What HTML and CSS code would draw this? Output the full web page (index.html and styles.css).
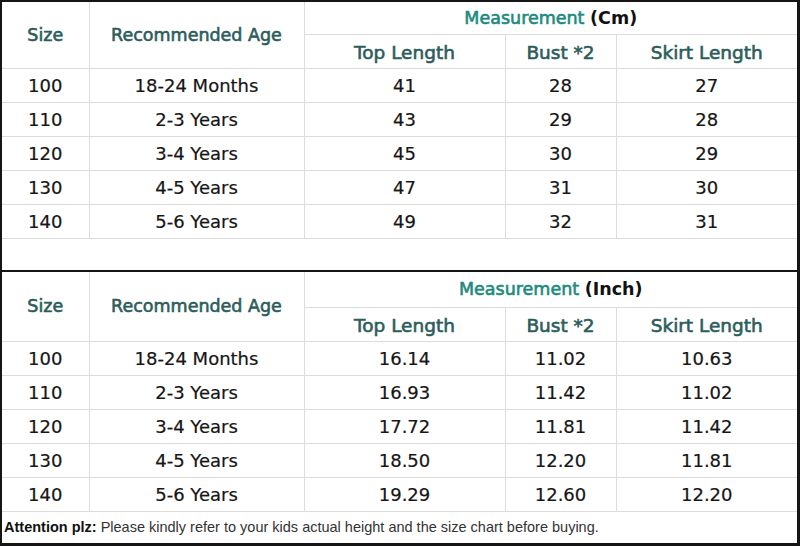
FILE: index.html
```html
<!DOCTYPE html>
<html>
<head>
<meta charset="utf-8">
<link rel="stylesheet" href="styles.css">
</head>
<body>
<div class="chart">
  <table class="size-table">
    <colgroup>
      <col class="c1"><col class="c2"><col class="c3"><col class="c4"><col class="c5">
    </colgroup>
    <tr class="h1">
      <td rowspan="2" class="head">Size</td>
      <td rowspan="2" class="head">Recommended Age</td>
      <td colspan="3" class="meas"><span class="teal">Measurement</span> <span class="unit">(Cm)</span></td>
    </tr>
    <tr class="h2">
      <td class="head sub">Top Length</td><td class="head sub">Bust *2</td><td class="head sub">Skirt Length</td>
    </tr>
    <tr><td>100</td><td>18-24 Months</td><td>41</td><td>28</td><td>27</td></tr>
    <tr><td>110</td><td>2-3 Years</td><td>43</td><td>29</td><td>28</td></tr>
    <tr><td>120</td><td>3-4 Years</td><td>45</td><td>30</td><td>29</td></tr>
    <tr><td>130</td><td>4-5 Years</td><td>47</td><td>31</td><td>30</td></tr>
    <tr><td>140</td><td>5-6 Years</td><td>49</td><td>32</td><td>31</td></tr>
    <tr class="blank"><td colspan="5"></td></tr>
  </table>
  <div class="divider"></div>
  <table class="size-table">
    <colgroup>
      <col class="c1"><col class="c2"><col class="c3"><col class="c4"><col class="c5">
    </colgroup>
    <tr class="h1b">
      <td rowspan="2" class="head">Size</td>
      <td rowspan="2" class="head">Recommended Age</td>
      <td colspan="3" class="meas"><span class="teal">Measurement</span> <span class="unit">(Inch)</span></td>
    </tr>
    <tr class="h2">
      <td class="head sub">Top Length</td><td class="head sub">Bust *2</td><td class="head sub">Skirt Length</td>
    </tr>
    <tr><td>100</td><td>18-24 Months</td><td>16.14</td><td>11.02</td><td>10.63</td></tr>
    <tr><td>110</td><td>2-3 Years</td><td>16.93</td><td>11.42</td><td>11.02</td></tr>
    <tr><td>120</td><td>3-4 Years</td><td>17.72</td><td>11.81</td><td>11.42</td></tr>
    <tr><td>130</td><td>4-5 Years</td><td>18.50</td><td>12.20</td><td>11.81</td></tr>
    <tr><td>140</td><td>5-6 Years</td><td>19.29</td><td>12.60</td><td>12.20</td></tr>
    <tr class="note"><td colspan="5"><b>Attention plz:</b> Please kindly refer to your kids actual height and the size chart before buying.</td></tr>
  </table>
</div>
</body>
</html>
```

FILE: styles.css
```css
html, body {
  margin: 0;
  padding: 0;
  background: #ffffff;
}

.chart {
  width: 800px;
  height: 546px;
  box-sizing: border-box;
  border-top: 2px solid #151515;
  border-left: 2px solid #151515;
  border-right: 3px solid #151515;
  border-bottom: 3px solid #151515;
  display: flex;
  flex-direction: column;
  overflow: hidden;
}

.size-table {
  width: 795px;
  border-collapse: collapse;
  table-layout: fixed;
  font-family: "DejaVu Sans", sans-serif;
  font-size: 18px;
  color: #161616;
  flex: none;
}

.c1 { width: 87px; }
.c2 { width: 215px; }
.c3 { width: 201px; }
.c4 { width: 111px; }
.c5 { width: 181px; }

.size-table td {
  border: 1px solid #dcdcdc;
  text-align: center;
  vertical-align: middle;
  padding: 0;
  height: 34px;
  box-sizing: border-box;
  white-space: nowrap;
  -webkit-text-stroke: 0.2px #161616;
}

.size-table tr:first-child td { border-top: none; }
.size-table td:first-child { border-left: none; }
.size-table td:last-child { border-right: none; }

.size-table .h1 td { height: 32px; }
.size-table .h1b td { height: 35px; }

.size-table .head {
  color: #2c5d5b;
  font-size: 17.5px;
  -webkit-text-stroke: 0.6px #2c5d5b;
}

.size-table .head.sub {
  font-size: 18.5px;
  padding-top: 2px;
}

.size-table .meas {
  font-size: 17.5px;
  -webkit-text-stroke: 0;
}

.teal {
  color: #1c8a7e;
  -webkit-text-stroke: 0.6px #1c8a7e;
}

.unit {
  color: #111111;
  font-weight: bold;
}

.size-table .blank td {
  height: 32px;
  border-bottom: none;
}

.divider {
  height: 2px;
  background: #151515;
  flex: none;
}

.size-table .note td {
  text-align: left;
  font-family: "Liberation Sans", Arial, sans-serif;
  font-size: 14.5px;
  color: #333333;
  padding-left: 2px;
  height: 32px;
  border-bottom: none;
  -webkit-text-stroke: 0;
}

.note b {
  color: #111111;
}
```
